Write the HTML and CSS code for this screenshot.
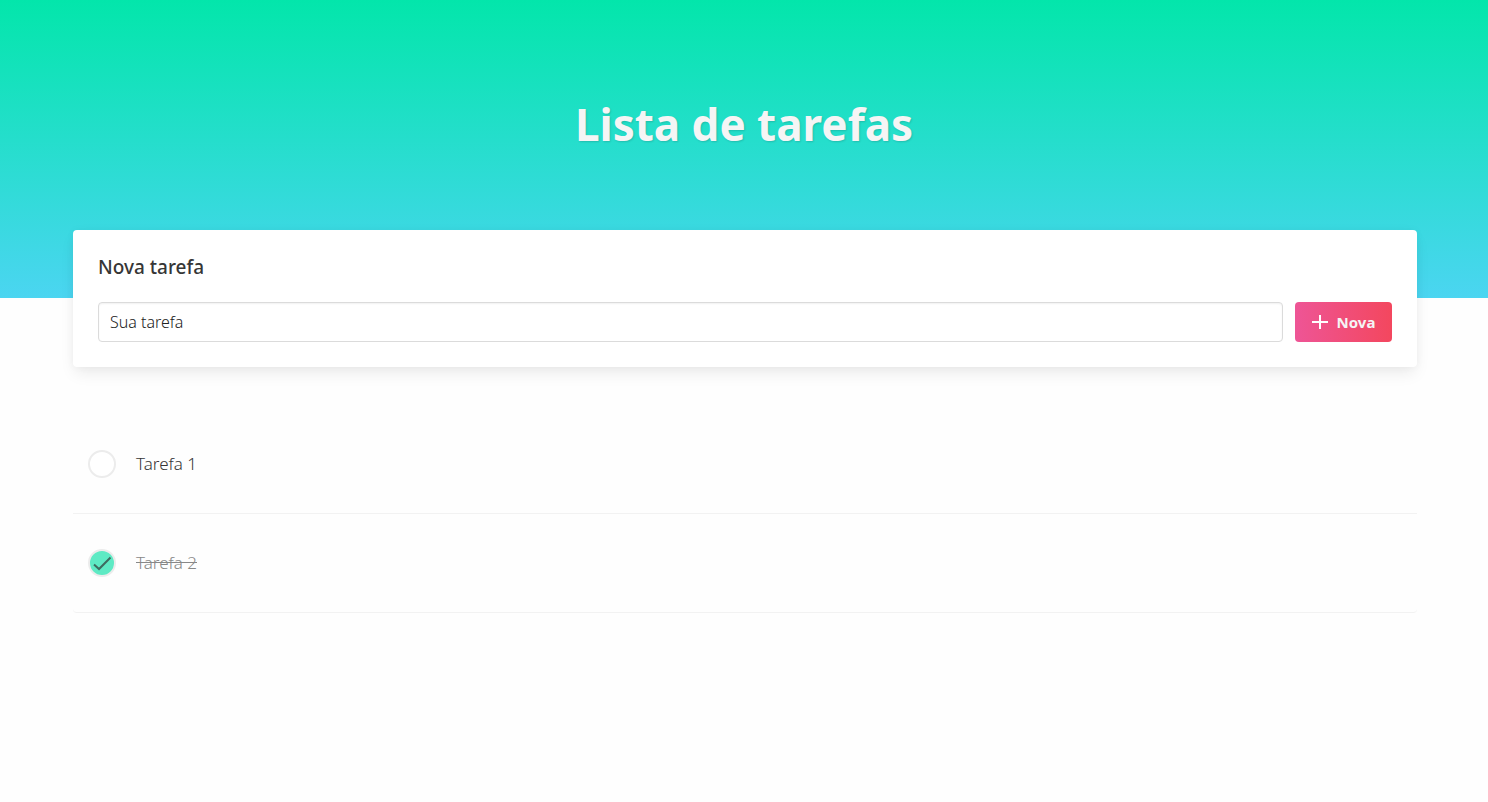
FILE: index.html
```html
<!DOCTYPE html>
<html lang="pt-BR">
<head>
<meta charset="utf-8">
<meta name="viewport" content="width=device-width, initial-scale=1">
<title>Lista de tarefas</title>
<link rel="stylesheet" href="styles.css">
</head>
<body>
<header class="hero">
  <h1 class="title">Lista de tarefas</h1>
</header>
<main class="container">
  <form class="card">
    <label class="card-title" for="task">Nova tarefa</label>
    <div class="row">
      <input class="input" id="task" type="text" placeholder="Sua tarefa">
      <button class="button" type="button">
        <svg class="plus" viewBox="0 0 16 16" aria-hidden="true"><path d="M8 1v14M0 8h16"/></svg>
        <span>Nova</span>
      </button>
    </div>
  </form>
  <ul class="tasks">
    <li class="task">
      <input class="check" type="checkbox" id="t1">
      <svg class="mark" viewBox="0 0 28 28" aria-hidden="true"><path d="M6 15.5l5 4.5L22.500 8.500"/></svg>
      <label class="task-name" for="t1">Tarefa 1</label>
    </li>
    <li class="task">
      <input class="check" type="checkbox" id="t2" checked>
      <svg class="mark" viewBox="0 0 28 28" aria-hidden="true"><path d="M6 15.500l5 4.500L22.500 8.500"/></svg>
      <label class="task-name" for="t2">Tarefa 2</label>
    </li>
  </ul>
</main>
</body>
</html>
```
FILE: styles.css
```css
* { box-sizing: border-box; }
body {
  margin: 0;
  background: #fefefe;
  color: #363636;
  font-family: "Noto Sans", "Open Sans", sans-serif;
}
.hero {
  display: flex;
  justify-content: center;
  padding: 96px 24px 146px;
  background: linear-gradient(180deg, #03e6ab, #4bd5f1);
}
.title {
  margin: 0;
  color: #f5f5f5;
  font-size: 44px;
  font-weight: 700;
  line-height: 56px;
  text-shadow: 1px 1px 2px rgba(0, 0, 0, 0.15);
}
.container {
  margin: -68px 71px 0 73px;
}
.card {
  padding: 25px;
  border-radius: 4px;
  background: #fff;
  box-shadow: 0 8px 16px -2px rgba(10, 10, 10, 0.08), 0 0 8px rgba(10, 10, 10, 0.04);
}
.card-title {
  display: block;
  margin-bottom: 23px;
  font-size: 19px;
  font-weight: 500;
  line-height: 24px;
}
.row { display: flex; gap: 12px; }
.input {
  flex: 1;
  min-width: 0;
  height: 40px;
  padding: 0 11px;
  border: 1px solid #dbdbdb;
  border-radius: 4px;
  box-shadow: inset 0 1px 2px rgba(10, 10, 10, 0.06);
  color: #363636;
  font: 300 16px/24px "Noto Sans", sans-serif;
}
.input::placeholder { color: #222; opacity: 1; }
.button {
  display: flex;
  align-items: center;
  justify-content: center;
  gap: 9px;
  width: 97px;
  height: 40px;
  padding: 0;
  border: 0;
  border-radius: 4px;
  background: linear-gradient(90deg, #ee5596, #f3475e);
  color: #f5f5f5;
  font: 700 15px/24px "Noto Sans", sans-serif;
}
.plus { width: 16px; height: 16px; fill: none; stroke: #fff; stroke-width: 2; }
.tasks { margin: 48px 0 0; padding: 0; list-style: none; }
.task {
  display: grid;
  grid-template-columns: 28px 1fr;
  align-items: center;
  column-gap: 20px;
  height: 99px;
  padding: 0 15px;
  border-bottom: 1px solid #f2f2f2;
}
.task:last-child { border-radius: 0 0 4px 4px; }
.check, .mark { grid-area: 1 / 1; width: 28px; height: 28px; margin: 0; }
.check { appearance: none; border: 2px solid #ececec; border-radius: 50%; background: #fff; }
.check:checked { background: #5eeac4; }
.mark { display: none; fill: none; stroke: #3e6b60; stroke-width: 2; pointer-events: none; }
.check:checked + .mark { display: block; }
.task-name { font-size: 17px; font-weight: 300; line-height: 24px; }
.check:checked ~ .task-name { color: #888; text-decoration: line-through; }
```
